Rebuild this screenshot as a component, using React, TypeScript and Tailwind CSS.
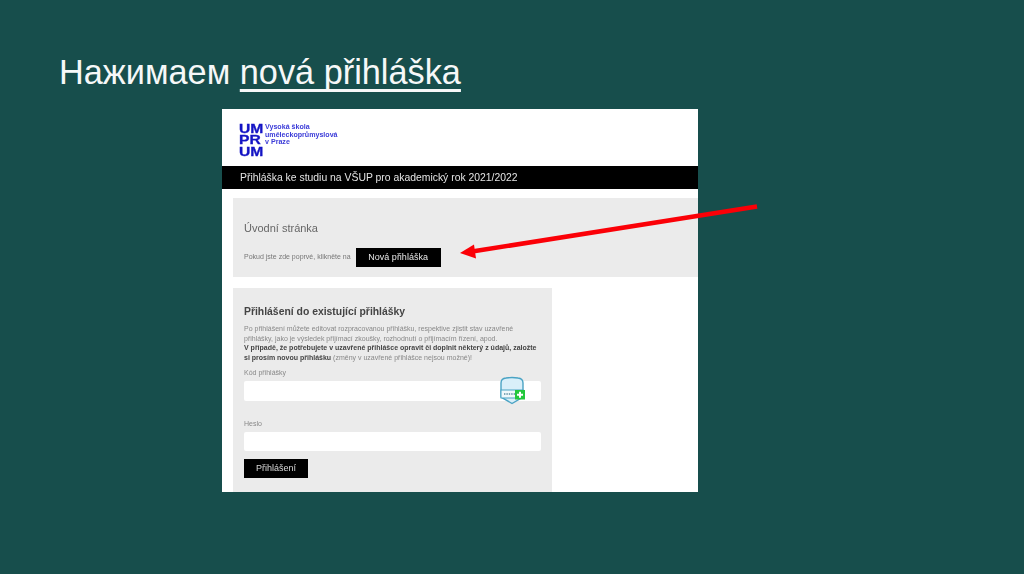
const App = () => {
  return (
    <div className="relative h-[574px] w-[1024px] overflow-hidden bg-[#174e4c] font-['Liberation_Sans',Arial,sans-serif]">
      <h1 className="pl-[59px] pt-[52px] text-[34.3px] leading-[40px] text-[#f6f8f8]">
        Нажимаем <span className="underline decoration-[2.5px] underline-offset-[5px] [text-decoration-skip-ink:none]">nová přihláška</span>
      </h1>

      {/* screenshot of the form, blurred a little like the original */}
      <div className="ml-[222px] mt-[17px] h-[383px] w-[476px] overflow-hidden bg-white blur-[0.4px]">
        <div className="flex h-[57px] items-start pl-[17px] pt-[15px]">
          <div className="w-[26px] origin-left scale-x-[1.25] text-[12.5px] font-bold leading-[11.3px] text-[#1414c4] [-webkit-text-stroke:0.3px_#1414c4]">
            <div>UM</div>
            <div>PR</div>
            <div>UM</div>
          </div>
          <div className="text-[7.1px] font-bold leading-[7.6px] text-[#3b3bd8]">
            <div>Vysoká škola</div>
            <div>uměleckoprůmyslová</div>
            <div>v Praze</div>
          </div>
        </div>

        <div className="flex h-[23px] items-center bg-black pl-[18px] text-[10.4px] text-[#e4e4e4]">
          Přihláška ke studiu na VŠUP pro akademický rok 2021/2022
        </div>

        <div className="ml-[11px] mt-[9px] h-[79px] bg-[#ebebeb] pl-[11px] pt-[22px]">
          <div className="text-[11px] leading-[16px] text-[#666666]">Úvodní stránka</div>
          <div className="mt-[12px] flex items-center gap-[5px]">
            <span className="text-[7px] text-[#777777]">Pokud jste zde poprvé, klikněte na</span>
            <span className="flex h-[19px] w-[85px] items-center justify-center bg-black text-[9px] text-[#e8e8e8]">
              Nová přihláška
            </span>
          </div>
        </div>

        <div className="ml-[11px] mt-[11px] h-[204px] w-[319px] bg-[#ebebeb] px-[11px] pt-[17px]">
          <h2 className="text-[10.4px] font-bold leading-[14px] text-[#444444]">Přihlášení do existující přihlášky</h2>
          <div className="mt-[5px] text-[7px] leading-[9.7px] text-[#888888]">
            <p>Po přihlášení můžete editovat rozpracovanou přihlášku, respektive zjistit stav uzavřené</p>
            <p>přihlášky, jako je výsledek přijímací zkoušky, rozhodnutí o přijímacím řízení, apod.</p>
            <p className="whitespace-nowrap">
              <b className="text-[#444444]">V případě, že potřebujete v uzavřené přihlášce opravit či doplnit některý z údajů, založte</b>
            </p>
            <p>
              <b className="text-[#444444]">si prosím novou přihlášku</b> (změny v uzavřené přihlášce nejsou možné)!
            </p>
          </div>
          <div className="mt-[5px] text-[7px] leading-[10px] text-[#888888]">Kód přihlášky</div>
          <div className="mt-[3px] h-[20px] w-[297px] rounded-[2px] bg-white" />
          <div className="mt-[18px] text-[7px] leading-[10px] text-[#888888]">Heslo</div>
          <div className="mt-[3px] h-[19px] w-[297px] rounded-[2px] bg-white" />
          <div className="mt-[8px] flex h-[19px] w-[64px] items-center justify-center bg-black text-[9px] text-[#d8d8d8]">
            Přihlášení
          </div>
        </div>
      </div>

      {/* password manager badge over the input */}
      <svg className="absolute left-[499px] top-[376px] blur-[0.3px]" width="28" height="30" viewBox="0 0 28 30">
        <path d="M2 7 Q2 2.5 7 2 Q13 1 19 2 Q24 2.5 24 7 V21 L13 27.5 L2 21 Z" fill="#d9eff9" stroke="#4aa3c4" strokeWidth="1.4" />
        <rect x="2" y="14" width="22" height="8" fill="#f0f8fb" stroke="#4aa3c4" strokeWidth="1" />
        <path d="M5 18 H16" stroke="#5a8ca0" strokeWidth="1.4" strokeDasharray="1.4 1" />
        <rect x="16" y="14" width="10" height="9.5" fill="#22c83c" />
        <path d="M21 15.8 V21.8 M18 18.8 H24" stroke="#ffffff" strokeWidth="2" />
      </svg>

      {/* red arrow drawn on top of the slide */}
      <svg className="absolute left-0 top-0" width="1024" height="574" viewBox="0 0 1024 574">
        <path d="M757 206.5 L472 251.5" stroke="#fb0007" strokeWidth="4.6" />
        <path d="M460 253 L474 244.5 L476 258.5 Z" fill="#fb0007" />
      </svg>
    </div>
  );
};

export default App;
